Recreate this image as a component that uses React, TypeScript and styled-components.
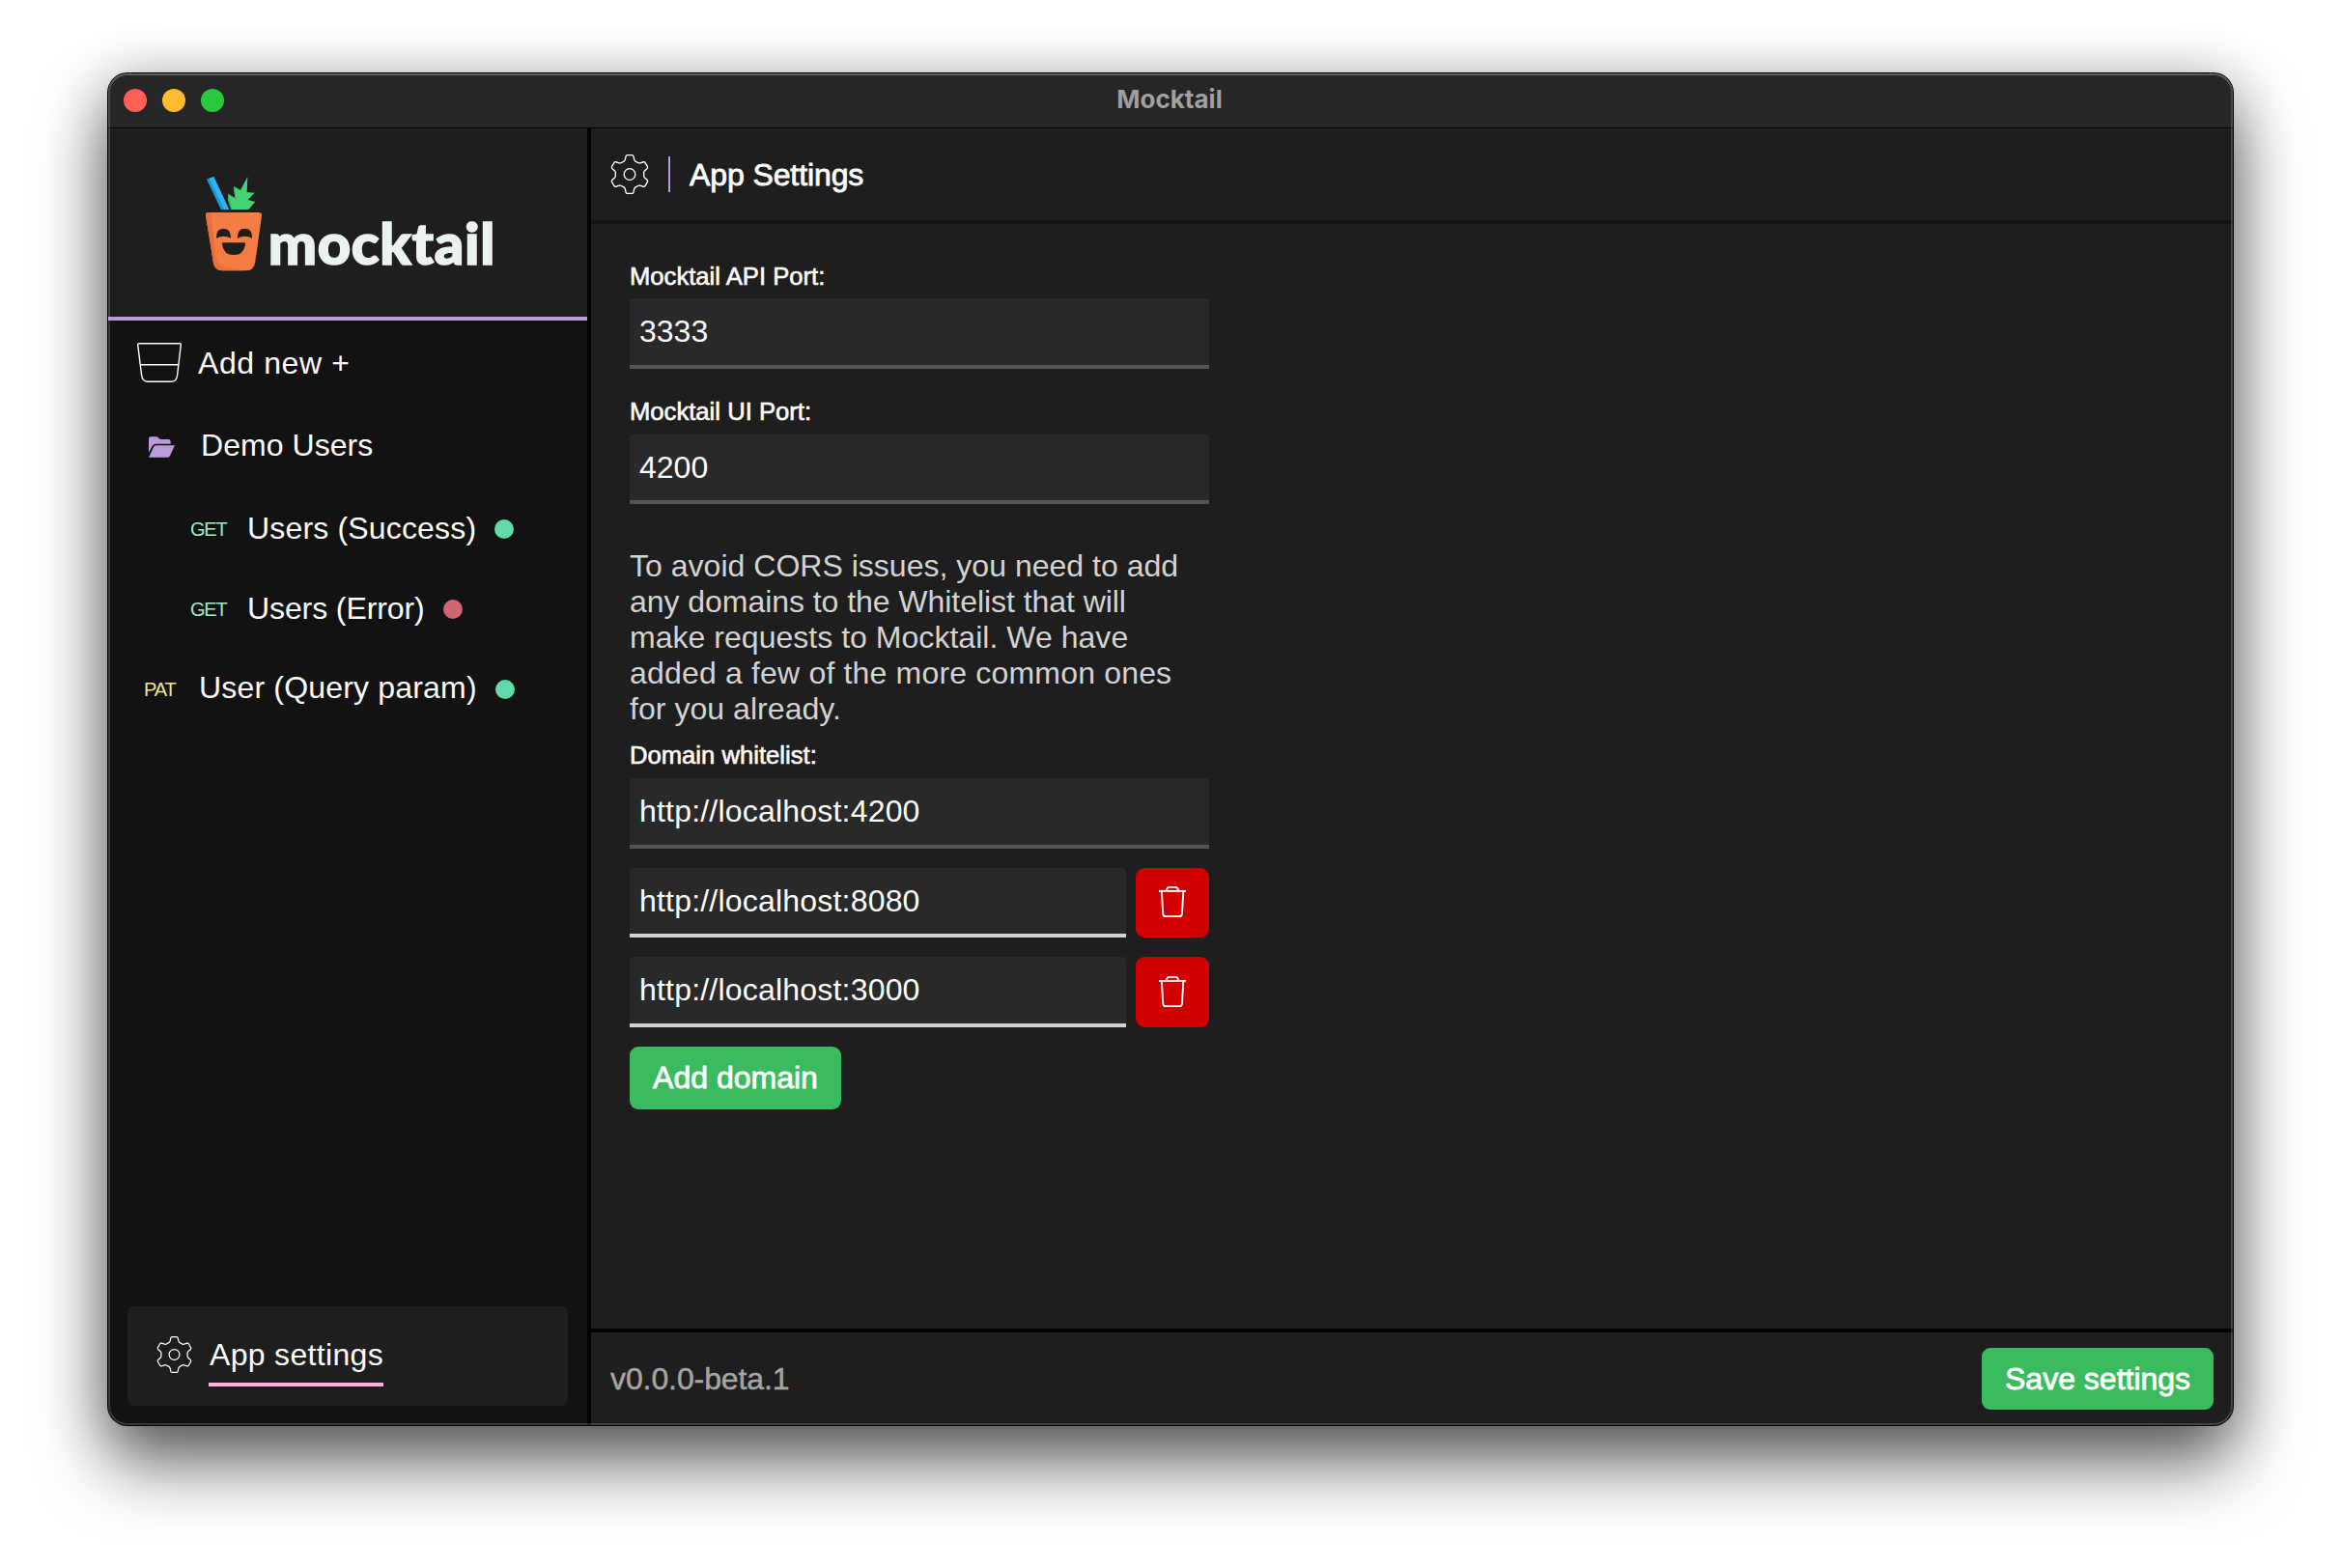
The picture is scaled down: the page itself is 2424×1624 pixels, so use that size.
import React, { useState } from "react";
import styled, { createGlobalStyle } from "styled-components";

const GlobalStyle = createGlobalStyle`
  * { box-sizing: border-box; }
  body {
    margin: 0;
    background: #fff;
    font-family: "Liberation Sans", Arial, Helvetica, sans-serif;
    font-size: 32px;
    line-height: 36px;
    color: #fff;
    overflow: hidden;
  }
  button, input { font: inherit; color: inherit; border: 0; margin: 0; outline: 0; }
  svg { display: block; flex: none; overflow: visible; }
`;

const Desktop = styled.div`
  height: 1624px;
  padding: 76px 112px 148px;
`;

const Window = styled.div`
  position: relative;
  display: flex;
  flex-direction: column;
  width: 2200px;
  height: 1400px;
  border-radius: 20px;
  background: #1e1e1e;
  box-shadow: 0 0 0 1px #000, 0 40px 72px rgba(0, 0, 0, 0.56), 0 8px 60px rgba(0, 0, 0, 0.3);

  &::after {
    content: "";
    position: absolute;
    inset: 0;
    border-radius: 20px;
    box-shadow: inset 0 0 0 2px rgba(255, 255, 255, 0.16), inset 0 2px 0 0 rgba(255, 255, 255, 0.12);
    pointer-events: none;
  }
`;

const TitleBar = styled.header`
  display: grid;
  grid-template-columns: 1fr auto 1fr;
  align-items: center;
  height: 57px;
  flex: none;
  padding: 0 16px;
  border-radius: 20px 20px 0 0;
  border-bottom: 1px solid #000;
  background: #262626;
`;

const Lights = styled.div`
  display: flex;
  gap: 16px;
`;

const Light = styled.span<{ $color: string }>`
  width: 24px;
  height: 24px;
  border-radius: 50%;
  background: ${(p) => p.$color};
`;

const WindowTitle = styled.h1`
  margin: 0;
  padding: 0 2px 3px 0;
  font: 700 26px/32px Inter, "Liberation Sans", sans-serif;
  letter-spacing: 0;
  color: #a0a0a0;
`;

const Body = styled.div`
  flex: 1;
  display: flex;
  min-height: 0;
`;

const Sidebar = styled.aside`
  display: flex;
  flex-direction: column;
  width: 500px;
  border-right: 4px solid #000;
  border-radius: 0 0 0 20px;
  background: #121212;
`;

const Brand = styled.div`
  height: 199px;
  padding: 47px 0 0 100px;
  border-bottom: 4px solid #bb99dd;
  background: #1e1e1e;
`;

const BrandText = styled.text`
  font-family: Lato, sans-serif;
  font-weight: 900;
  font-size: 179px;
  fill: #eaf3f2;
  stroke: #eaf3f2;
  stroke-width: 5px;
`;

const NavList = styled.nav`
  flex: 1;
  display: flex;
  flex-direction: column;
`;

const NavRow = styled.div<{ $height: number; $indent: number }>`
  display: flex;
  align-items: center;
  height: ${(p) => p.$height}px;
  padding-left: ${(p) => p.$indent}px;
`;

const NavIcon = styled.span<{ $up?: number; $down?: number }>`
  padding: ${(p) => p.$down ?? 0}px 0 ${(p) => p.$up ?? 0}px;
`;

const NavLabel = styled.span<{ $gap: number; $spacing?: number }>`
  margin-left: ${(p) => p.$gap}px;
  letter-spacing: ${(p) => p.$spacing ?? 0.1}px;
  white-space: nowrap;
`;

const Method = styled.span<{ $color: string; $width: number; $spacing: number; $drop: number }>`
  width: ${(p) => p.$width}px;
  padding-top: ${(p) => p.$drop}px;
  font-size: 20px;
  letter-spacing: ${(p) => p.$spacing}px;
  color: ${(p) => p.$color};
`;

const Status = styled.span<{ $ok: boolean; $drop: number }>`
  width: 20px;
  height: 20px;
  margin: ${(p) => p.$drop}px 0 0 19px;
  border-radius: 50%;
  background: ${(p) => (p.$ok ? "#62d9a8" : "#d0666f")};
`;

const SettingsLink = styled.a`
  display: flex;
  align-items: center;
  height: 103px;
  margin: 0 20px 20px;
  padding: 0 0 3px 30px;
  border-radius: 6px;
  background: #1e1e1e;
`;

const SettingsText = styled.span`
  margin: 15px 0 0 17px;
  padding: 0 0 11px 1px;
  border-bottom: 4px solid #ffafdc;
  letter-spacing: 0.32px;
`;

const Main = styled.main`
  flex: 1;
  display: flex;
  flex-direction: column;
  min-width: 0;
`;

const PageHeader = styled.div`
  display: flex;
  align-items: center;
  height: 99px;
  padding: 0 0 1px 20px;
  border-bottom: 4px solid #131313;
`;

const PageTitle = styled.h2`
  display: flex;
  align-items: center;
  height: 37px;
  margin: 1px 0 0 20px;
  padding: 1px 0 0 20px;
  border-left: 2px solid #bb99dd;
  font-size: 32px;
  font-weight: 400;
  letter-spacing: -0.1px;
  -webkit-text-stroke: 0.8px #fff;
`;

const Form = styled.form`
  flex: 1;
  display: flex;
  flex-direction: column;
  width: 640px;
  padding: 40px 0 0 40px;
`;

const Label = styled.label<{ $snug?: boolean }>`
  height: 37px;
  font-size: 25.6px;
  line-height: ${(p) => (p.$snug ? 26 : 28)}px;
  letter-spacing: 0.02px;
  -webkit-text-stroke: 0.6px #fff;
`;

const Field = styled.div<{ $after: number }>`
  display: flex;
  gap: 10px;
  margin-bottom: ${(p) => p.$after}px;
`;

const Input = styled.input<{ $locked?: boolean; $tall?: boolean }>`
  flex: 1;
  min-width: 0;
  height: ${(p) => (p.$tall ? 73 : 72)}px;
  padding: 0 10px;
  border-bottom: 4px solid ${(p) => (p.$locked ? "#555" : "#d2d2d2")};
  border-radius: 4px 4px 0 0;
  background: #292929;
  letter-spacing: ${(p) => (p.type === "url" ? 0.2 : 0)}px;
`;

const Note = styled.p`
  margin: 0;
  height: 201px;
  line-height: 37px;
  color: #d3d3d3;
`;

const NoteLine = styled.span<{ $spacing: number }>`
  display: block;
  white-space: nowrap;
  letter-spacing: ${(p) => p.$spacing}px;
`;

const Button = styled.button`
  padding: 0 24px;
  border-radius: 9px;
  background: #3abb60;
  white-space: nowrap;
  -webkit-text-stroke: 0.8px #fff;
`;

const AddButton = styled(Button)`
  align-self: flex-start;
  width: 219px;
  height: 65px;
  padding-bottom: 2px;
`;

const SaveButton = styled(Button)`
  width: 240px;
  height: 64px;
`;

const DeleteButton = styled(Button)`
  display: grid;
  place-items: center;
  width: 76px;
  padding: 0 0 2px;
  background: #d10000;
`;

const Footer = styled.footer`
  display: flex;
  align-items: center;
  justify-content: space-between;
  height: 100px;
  padding: 0 20px 0 20px;
  border-top: 4px solid #000;
`;

const Version = styled.span`
  color: #a5a5a5;
  letter-spacing: -0.1px;
  -webkit-text-stroke: 0.5px #a5a5a5;
`;

const TOOTH: [number, number][] = [
  [-5.6, -13.3], [-4.9, -13.8], [-4.6, -14.8],
  [-3.8, -18.3], [-3.5, -19.4], [-2.4, -19.4],
  [2.4, -19.4], [3.5, -19.4], [3.8, -18.3],
  [4.6, -14.8], [4.9, -13.8], [5.6, -13.3],
];

const gearPath =
  Array.from({ length: 6 }, (_, k) => {
    const a = (k * Math.PI) / 3;
    const p = TOOTH.map(([x, y]) =>
      `${(x * Math.cos(a) - y * Math.sin(a)).toFixed(2)} ${(x * Math.sin(a) + y * Math.cos(a)).toFixed(2)}`
    );
    return [0, 3, 6, 9].map((i) => `${k || i ? "L" : "M"}${p[i]}Q${p[i + 1]} ${p[i + 2]}`).join("");
  }).join("") + "Z";

const Gear = ({ width, height }: { width: number; height: number }) => (
  <svg width={width} height={height} viewBox="-19 -20 38 40" fill="none" stroke="#fff" strokeWidth="1.3">
    <path d={gearPath} />
    <circle r="5.7" />
  </svg>
);

const Logo = () => (
  <svg width="300" height="102" viewBox="66 45 900 306">
    <path d="M73 62L94 53L142 156H117Z" fill="#2fb4f8" />
    <path d="M73 62L80 59L127 156H117Z" fill="#1c98d4" />
    <path d="M199 54L197 102L221 104L200 126L223 132L202 156H148L138 125V107L160 120L156 84L177 96Z" fill="#46d275" />
    <path d="M199 54L177 96L156 84L160 120L138 107V125L148 156H151L141 113L163 124L159 89L179 99Z" fill="#38b862" />
    <path d="M69 175Q68 165 78 165H234Q244 165 243 176L223 318Q219 346 196 346H120Q97 346 93 322Z" fill="#f57c42" />
    <path d="M69 175Q68 165 78 165H86L90 205L101 305Q106 333 140 337L188 346H120Q97 346 93 322Z" fill="#e8703a" />
    <path d="M102 245Q101 215 124 215Q148 215 147 245Q124 234 102 245Z" fill="#1e1e1e" />
    <path d="M168 245Q167 215 190 215Q214 215 213 245Q190 234 168 245Z" fill="#1e1e1e" />
    <path d="M120 262Q120 259 123 259H189Q192 259 192 262Q189 297 156 297Q123 297 120 262Z" fill="#1e1e1e" />
    <BrandText x="263" y="326" textLength="704" lengthAdjust="spacing">mocktail</BrandText>
  </svg>
);

const Glass = () => (
  <svg width="46" height="41" viewBox="0 0 46 41" fill="none" stroke="#fff" strokeWidth="1.4">
    <path d="M0.7 2.2Q0.6 0.7 2.2 0.7H43.8Q45.4 0.7 45.3 2.2L41.6 33.5Q40.9 40.3 35 40.3H11Q5.4 40.3 4.6 33.5Z" />
    <path d="M3.4 22.8H42.6" />
  </svg>
);

const Folder = () => (
  <svg width="27" height="22" viewBox="0 0 81 64" fill="#bb9add">
    <path d="M0 49V7Q0 0 7 0H23Q28 0 31 4Q34 8 39 8H61Q68 8 68 15V22H21Q15 22 11 29Z" />
    <path d="M22 27H81L66 59Q63 64 59 64H0Q2 61 15 32Q17 27 22 27Z" />
  </svg>
);

const Trash = () => (
  <svg width="28" height="32" viewBox="0 0 28 32" fill="none" stroke="#fff" strokeWidth="1.9">
    <path d="M0 4.9H28" />
    <path d="M7.8 4.4Q8.3 0.9 11 0.9H17Q19.7 0.9 20.2 4.4" />
    <path d="M2.9 5L4.2 28.3Q4.5 31.1 7 31.1H21.2Q23.7 31.1 24 28.3L25.3 5" />
  </svg>
);

type Endpoint = { method: string; name: string; ok: boolean; nested: boolean; height: number; spacing: number };

const endpoints: Endpoint[] = [
  { method: "GET", name: "Users (Success)", ok: true, nested: true, height: 90, spacing: 0.17 },
  { method: "GET", name: "Users (Error)", ok: false, nested: true, height: 76, spacing: -0.1 },
  { method: "PAT", name: "User (Query param)", ok: true, nested: false, height: 88, spacing: 0.18 },
];

const noteLines: [string, number][] = [
  ["To avoid CORS issues, you need to add", 0.02],
  ["any domains to the Whitelist that will", -0.05],
  ["make requests to Mocktail. We have", 0.03],
  ["added a few of the more common ones", 0.18],
  ["for you already.", 0.05],
];

export default function App() {
  const [domains, setDomains] = useState(["http://localhost:8080", "http://localhost:3000"]);

  return (
    <>
      <GlobalStyle />
      <Desktop>
        <Window>
          <TitleBar>
            <Lights>
              <Light $color="#ff5f57" />
              <Light $color="#febc2e" />
              <Light $color="#28c840" />
            </Lights>
            <WindowTitle>Mocktail</WindowTitle>
          </TitleBar>
          <Body>
            <Sidebar>
              <Brand>
                <Logo />
              </Brand>
              <NavList>
                <NavRow $height={88} $indent={30}>
                  <NavIcon $up={2}>
                    <Glass />
                  </NavIcon>
                  <NavLabel $gap={17} $spacing={0.6}>Add new +</NavLabel>
                </NavRow>
                <NavRow $height={82} $indent={42}>
                  <NavIcon $down={3}>
                    <Folder />
                  </NavIcon>
                  <NavLabel $gap={27} $spacing={0.05}>Demo Users</NavLabel>
                </NavRow>
                {endpoints.map((e) => (
                  <NavRow key={e.name} $height={e.height} $indent={e.nested ? 85 : 37}>
                    <Method
                      $color={e.method === "GET" ? "#a5e8c8" : "#f0e68c"}
                      $width={e.nested ? 44 : 42}
                      $spacing={e.nested ? -1.2 : -1.1}
                      $drop={e.nested ? 2 : 4}
                    >
                      {e.method}
                    </Method>
                    <NavLabel $gap={15} $spacing={e.spacing}>{e.name}</NavLabel>
                    <Status $ok={e.ok} $drop={e.nested ? 2 : 4} />
                  </NavRow>
                ))}
              </NavList>
              <SettingsLink>
                <Gear width={37} height={38} />
                <SettingsText>App settings</SettingsText>
              </SettingsLink>
            </Sidebar>
            <Main>
              <PageHeader>
                <Gear width={40} height={41} />
                <PageTitle>App Settings</PageTitle>
              </PageHeader>
              <Form onSubmit={(e) => e.preventDefault()}>
                <Label>Mocktail API Port:</Label>
                <Field $after={31}>
                  <Input type="text" defaultValue="3333" $locked $tall />
                </Field>
                <Label $snug>Mocktail UI Port:</Label>
                <Field $after={46}>
                  <Input type="text" defaultValue="4200" $locked />
                </Field>
                <Note>
                  {noteLines.map(([text, spacing]) => (
                    <NoteLine key={text} $spacing={spacing}>{text}</NoteLine>
                  ))}
                </Note>
                <Label $snug>Domain whitelist:</Label>
                <Field $after={20}>
                  <Input type="url" defaultValue="http://localhost:4200" $locked $tall />
                </Field>
                {domains.map((d, i) => (
                  <Field key={d} $after={20}>
                    <Input type="url" defaultValue={d} $tall={i === 1} />
                    <DeleteButton
                      type="button"
                      aria-label="Delete domain"
                      onClick={() => setDomains(domains.filter((x) => x !== d))}
                    >
                      <Trash />
                    </DeleteButton>
                  </Field>
                ))}
                <AddButton type="button">Add domain</AddButton>
              </Form>
              <Footer>
                <Version>v0.0.0-beta.1</Version>
                <SaveButton type="button">Save settings</SaveButton>
              </Footer>
            </Main>
          </Body>
        </Window>
      </Desktop>
    </>
  );
}
